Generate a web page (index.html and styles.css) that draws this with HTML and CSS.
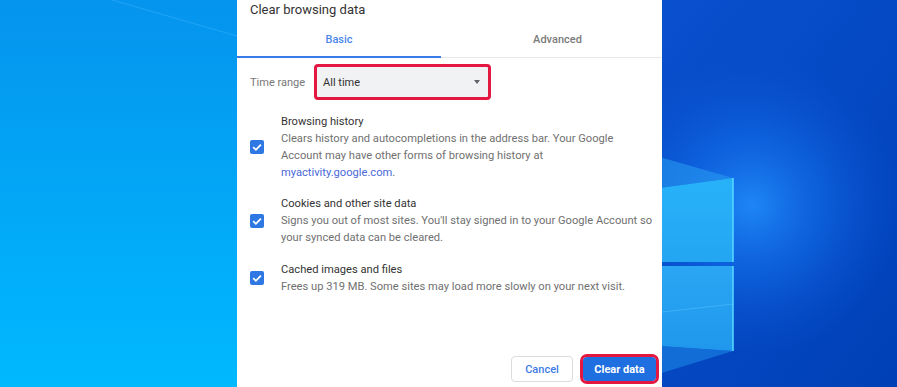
FILE: index.html
```html
<!DOCTYPE html>
<html>
<head>
    <title>Clear browsing data</title>
    <link rel="stylesheet" href="styles.css">
</head>
<body>

<div class="desktop">
    <svg class="wallpaper" width="897" height="387" viewBox="0 0 897 387">
        <defs>
            <linearGradient id="sky" x1="0" y1="0" x2="0" y2="1">
                <stop offset="0" stop-color="#0594ee"/>
                <stop offset="1" stop-color="#00b9fe"/>
            </linearGradient>
            <linearGradient id="deep" x1="0" y1="0" x2="1" y2="1">
                <stop offset="0" stop-color="#0a52d2"/>
                <stop offset="1" stop-color="#0040b6"/>
            </linearGradient>
            <radialGradient id="glow" cx="752" cy="205" r="150" gradientUnits="userSpaceOnUse">
                <stop offset="0" stop-color="#1e86f6" stop-opacity="1"/>
                <stop offset="0.5" stop-color="#1169e6" stop-opacity="0.6"/>
                <stop offset="1" stop-color="#0a55d2" stop-opacity="0"/>
            </radialGradient>
            <linearGradient id="pane1" x1="0" y1="0" x2="0" y2="1">
                <stop offset="0" stop-color="#27b2f8"/>
                <stop offset="1" stop-color="#24a6f3"/>
            </linearGradient>
            <linearGradient id="pane2" x1="0" y1="0" x2="0" y2="1">
                <stop offset="0" stop-color="#2aa6f4"/>
                <stop offset="1" stop-color="#1f97ec"/>
            </linearGradient>
        </defs>
        <rect width="897" height="387" fill="url(#sky)"/>
        <path d="M112 0 L237 36" stroke="#5cc2ff" stroke-opacity=".3" stroke-width="1.2"/>
        <rect x="600" width="297" height="387" fill="url(#deep)"/>
        <rect x="600" width="297" height="387" fill="url(#glow)"/>
        <polygon points="600,140 733,178 600,196" fill="#2a9ef2" opacity=".55"/>
        <polygon points="600,196 733,178 733,262 600,262" fill="url(#pane1)"/>
        <polygon points="600,266 733,266 733,351 600,342" fill="url(#pane2)"/>
        <path d="M600 319 L733 304" stroke="#5cc8ff" stroke-opacity=".45" stroke-width="1"/>
        <polygon points="600,342 733,351 600,392" fill="#1f8cea" opacity=".55"/>
        <path d="M733 178 L733 262 M733 266 L733 351" stroke="#5ad8ff" stroke-width="1.5"/>
    </svg>

    <div class="dialog">
        <div class="title">Clear browsing data</div>

        <div class="tabs">
            <div class="tab tab-basic active">Basic</div>
            <div class="tab tab-advanced">Advanced</div>
        </div>

        <div class="range">
            <span class="range-label">Time range</span>
            <div class="select">
                <span>All time</span>
                <span class="caret"></span>
            </div>
        </div>

        <div class="items">
            <div class="item">
                <span class="check"><svg width="14" height="14" viewBox="0 0 14 14"><path d="M3.2 7.2 L5.9 9.8 L10.9 4.6" fill="none" stroke="#fff" stroke-width="1.8"/></svg></span>
                <div class="item-text">
                    <div class="item-title">Browsing history</div>
                    <div class="item-desc">Clears history and autocompletions in the address bar. Your Google<br>Account may have other forms of browsing history at<br><a class="link" href="javascript:;">myactivity.google.com</a>.</div>
                </div>
            </div>
            <div class="item">
                <span class="check"><svg width="14" height="14" viewBox="0 0 14 14"><path d="M3.2 7.2 L5.9 9.8 L10.9 4.6" fill="none" stroke="#fff" stroke-width="1.8"/></svg></span>
                <div class="item-text">
                    <div class="item-title">Cookies and other site data</div>
                    <div class="item-desc">Signs you out of most sites. You'll stay signed in to your Google Account so<br>your synced data can be cleared.</div>
                </div>
            </div>
            <div class="item">
                <span class="check"><svg width="14" height="14" viewBox="0 0 14 14"><path d="M3.2 7.2 L5.9 9.8 L10.9 4.6" fill="none" stroke="#fff" stroke-width="1.8"/></svg></span>
                <div class="item-text">
                    <div class="item-title">Cached images and files</div>
                    <div class="item-desc">Frees up 319 MB. Some sites may load more slowly on your next visit.</div>
                </div>
            </div>
        </div>

        <div class="footer">
            <button class="btn btn-cancel">Cancel</button>
            <button class="btn btn-primary">Clear data</button>
        </div>
    </div>
</div>

</body>
</html>
```

FILE: styles.css
```css
body{ margin: 0;font-family: Roboto, "Liberation Sans", sans-serif;}
.desktop{ position: relative;width: 897px;height: 387px;overflow: hidden;}
.wallpaper{ position: absolute;left: 0;top: 0;}

.dialog{
    position: relative;
    margin-left: 237px;
    width: 425px;
    height: 387px;
    background: #FFF;
    display: flex;
    flex-direction: column;
}
.title{ padding-left: 13px;height: 20px;line-height: 20px;font-size: 13px;color: #333;}

.tabs{ display: flex;align-items: flex-start;height: 37px;border-bottom: solid 1px #E8E8E8;}
.tab{
    height: 38px;
    box-sizing: border-box;
    padding-top: 4px;
    line-height: 32px;
    font-size: 11px;
    font-weight: 500;
    color: #7a7a7a;
    text-align: center;
    border-bottom: solid 2px transparent;
}
.tab-basic{ width: 204px;}
.tab-advanced{ flex: 1;padding-left: 12px;}
.tab.active{ color: #4d86ea;border-bottom-color: #3b7be8;}

.range{ display: flex;align-items: center;margin-top: 6px;padding-left: 13px;height: 36px;}
.range-label{ font-size: 11px;color: #777;margin-right: 9px;}
.select{
    width: 177px;
    height: 36px;
    box-sizing: border-box;
    border: solid 3px #e3173f;
    border-radius: 4px;
    background: #f1f2f3;
    display: flex;
    align-items: center;
    justify-content: space-between;
    padding: 0 8px 0 6px;
    font-size: 11px;
    color: #333;
}
.caret{ width: 0;height: 0;border-left: solid 3.5px transparent;border-right: solid 3.5px transparent;border-top: solid 4px #5f6368;}

.items{ padding: 12.5px 0 0 13px;display: flex;flex-direction: column;gap: 14.5px;}
.item{ display: flex;align-items: center;}
.check{
    width: 14px;
    height: 14px;
    border-radius: 2px;
    background: #2f78e3;
    margin-right: 17px;
    flex: none;
}
.check svg{ display: block;}
.item-text{ font-size: 11.15px;line-height: 17px;}
.item-title{ color: #333;}
.item-desc{ color: #707070;}
.link{ color: #4a68d8;text-decoration: none;}

.footer{
    margin-top: auto;
    display: flex;
    justify-content: flex-end;
    align-items: center;
    gap: 10px;
    padding: 0 6px 5px 0;
}
.btn{
    font-family: Roboto, "Liberation Sans", sans-serif;
    font-size: 11px;
    font-weight: 500;
    border-radius: 4px;
    box-sizing: border-box;
    padding: 0;
    cursor: pointer;
}
.btn-cancel{ width: 62px;height: 26px;border: solid 1px #dadce0;background: #FFF;color: #3f7be6;}
.btn-primary{
    width: 73px;
    height: 24px;
    border: none;
    background: #1f6fe0;
    color: #FFF;
    font-weight: 700;
    outline: solid 3px #e3173f;
    outline-offset: 0;
}
```
